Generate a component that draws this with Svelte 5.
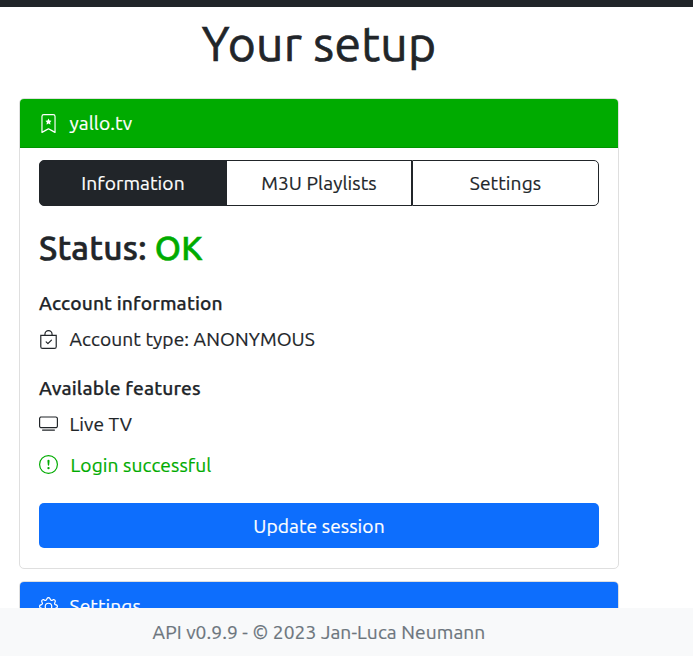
<script lang="ts">
  type Tab = { id: string; label: string };

  const tabs: Tab[] = [
    { id: "info", label: "Information" },
    { id: "playlists", label: "M3U Playlists" },
    { id: "settings", label: "Settings" },
  ];

  let active = $state("info");
</script>

<div class="page">
  <nav class="navbar"></nav>

  <main class="container">
    <h1>Your setup</h1>

    <section class="card provider">
      <div class="card-header success">
        <svg class="icon" viewBox="0 0 16 16" fill="currentColor">
          <path d="M7.84 4.1a.178.178 0 0 1 .32 0l.634 1.285a.178.178 0 0 0 .134.098l1.42.206c.145.021.204.2.098.303L9.42 6.993a.178.178 0 0 0-.051.158l.242 1.414a.178.178 0 0 1-.258.187l-1.27-.668a.178.178 0 0 0-.165 0l-1.27.668a.178.178 0 0 1-.257-.187l.242-1.414a.178.178 0 0 0-.05-.158l-1.03-1.001a.178.178 0 0 1 .098-.303l1.42-.206a.178.178 0 0 0 .134-.098L7.84 4.1z" />
          <path d="M2 2a2 2 0 0 1 2-2h8a2 2 0 0 1 2 2v13.500a.5.5 0 0 1-.777.416L8 13.101l-5.223 2.815A.5.5 0 0 1 2 15.500V2zm2-1a1 1 0 0 0-1 1v12.566l4.723-2.482a.5.5 0 0 1 .554 0L13 14.566V2a1 1 0 0 0-1-1H4z" />
        </svg>
        <span>yallo.tv</span>
      </div>

      <div class="card-body">
        <div class="btn-group">
          {#each tabs as tab (tab.id)}
            <button type="button" class:active={active === tab.id} onclick={() => (active = tab.id)}>
              {tab.label}
            </button>
          {/each}
        </div>

        <h2>Status: <span class="ok">OK</span></h2>

        <h3>Account information</h3>
        <p class="row">
          <svg class="icon" viewBox="0 0 16 16" fill="currentColor">
            <path fill-rule="evenodd" d="M10.854 8.146a.5.5 0 0 1 0 .708l-3 3a.5.5 0 0 1-.708 0l-1.500-1.500a.5.5 0 0 1 .708-.708L7.500 10.793l2.646-2.647a.5.5 0 0 1 .708 0z" />
            <path d="M8 1a2.500 2.500 0 0 1 2.500 2.500V4h-5v-.5A2.500 2.500 0 0 1 8 1zm3.500 3v-.5a3.500 3.500 0 1 0-7 0V4H1v10a2 2 0 0 0 2 2h10a2 2 0 0 0 2-2V4h-3.500zM2 5h12v9a1 1 0 0 1-1 1H3a1 1 0 0 1-1-1V5z" />
          </svg>
          <span>Account type: ANONYMOUS</span>
        </p>

        <h3 class="features">Available features</h3>
        <p class="row">
          <svg class="icon raised" viewBox="0 0 16 16" fill="currentColor">
            <path d="M2.500 13.500A.5.5 0 0 1 3 13h10a.5.5 0 0 1 0 1H3a.5.5 0 0 1-.5-.5zM13.991 3l.024.001a1.460 1.460 0 0 1 .538.143.757.757 0 0 1 .302.254c.067.1.145.277.145.602v5.991l-.001.024a1.464 1.464 0 0 1-.143.538.758.758 0 0 1-.254.302c-.1.067-.277.145-.602.145H2.009l-.024-.001a1.464 1.464 0 0 1-.538-.143.758.758 0 0 1-.302-.254C1.078 10.502 1 10.325 1 10V4.009l.001-.024a1.460 1.460 0 0 1 .143-.538.758.758 0 0 1 .254-.302C1.498 3.078 1.675 3 2 3h11.991zM14 2H2C0 2 0 4 0 4v6c0 2 2 2 2 2h12c2 0 2-2 2-2V4c0-2-2-2-2-2z" />
          </svg>
          <span>Live TV</span>
        </p>

        <p class="row login">
          <svg class="icon raised" viewBox="0 0 16 16" fill="currentColor">
            <path d="M8 15A7 7 0 1 1 8 1a7 7 0 0 1 0 14zm0 1A8 8 0 1 0 8 0a8 8 0 0 0 0 16z" />
            <path d="M7.002 11a1 1 0 1 1 2 0 1 1 0 0 1-2 0zM7.100 4.995a.905.905 0 1 1 1.800 0l-.35 3.507a.552.552 0 0 1-1.100 0L7.100 4.995z" />
          </svg>
          <span>Login successful</span>
        </p>

        <button type="button" class="update">Update session</button>
      </div>
    </section>

    <section class="card">
      <div class="card-header primary">
        <svg class="icon" viewBox="0 0 16 16" fill="currentColor">
          <path d="M8 4.754a3.246 3.246 0 1 0 0 6.492 3.246 3.246 0 0 0 0-6.492zM5.754 8a2.246 2.246 0 1 1 4.492 0 2.246 2.246 0 0 1-4.492 0z" />
          <path d="M9.796 1.343c-.527-1.790-3.065-1.790-3.592 0l-.094.319a.873.873 0 0 1-1.255.52l-.292-.16c-1.640-.892-3.433.902-2.540 2.541l.159.292a.873.873 0 0 1-.52 1.255l-.319.094c-1.790.527-1.790 3.065 0 3.592l.319.094a.873.873 0 0 1 .52 1.255l-.16.292c-.892 1.640.901 3.434 2.541 2.540l.292-.159a.873.873 0 0 1 1.255.52l.094.319c.527 1.790 3.065 1.790 3.592 0l.094-.319a.873.873 0 0 1 1.255-.52l.292.16c1.640.893 3.434-.902 2.540-2.541l-.159-.292a.873.873 0 0 1 .52-1.255l.319-.094c1.790-.527 1.790-3.065 0-3.592l-.319-.094a.873.873 0 0 1-.52-1.255l.16-.292c.893-1.640-.902-3.433-2.541-2.540l-.292.159a.873.873 0 0 1-1.255-.52l-.094-.319zm-2.633.283c.246-.835 1.428-.835 1.674 0l.094.319a1.873 1.873 0 0 0 2.693 1.115l.291-.16c.764-.415 1.600.42 1.184 1.185l-.159.292a1.873 1.873 0 0 0 1.116 2.692l.318.094c.835.246.835 1.428 0 1.674l-.319.094a1.873 1.873 0 0 0-1.115 2.693l.16.291c.415.764-.42 1.600-1.185 1.184l-.291-.159a1.873 1.873 0 0 0-2.693 1.116l-.094.318c-.246.835-1.428.835-1.674 0l-.094-.319a1.873 1.873 0 0 0-2.692-1.115l-.292.16c-.764.415-1.600-.42-1.184-1.185l.159-.291A1.873 1.873 0 0 0 1.945 8.930l-.319-.094c-.835-.246-.835-1.428 0-1.674l.319-.094A1.873 1.873 0 0 0 3.060 4.377l-.16-.292c-.415-.764.42-1.600 1.185-1.184l.292.159a1.873 1.873 0 0 0 2.692-1.115l.094-.319z" />
        </svg>
        <span>Settings</span>
      </div>
    </section>
  </main>

  <footer>
    <p>API v0.9.9 - © 2023 Jan-Luca Neumann</p>
  </footer>
</div>

<style>
  :global(body) {
    margin: 0;
    background: #fff;
  }

  .page {
    display: flex;
    flex-direction: column;
    height: 100vh;
    overflow: hidden;
    color: #212529;
    font-family: Ubuntu, "Noto Sans", sans-serif;
    font-size: 19.2px;
    line-height: 29px;
    letter-spacing: 0.08px;
    -webkit-text-stroke: 0.2px;
  }

  .navbar {
    flex: none;
    height: 7px;
    background: #212529;
  }

  .container {
    flex: 1;
    min-height: 0;
    box-sizing: border-box;
    width: 638px;
    padding: 7px 19px 0;
    overflow: hidden;
  }

  h1,
  h2,
  h3,
  p {
    margin: 0;
  }

  h1 {
    margin-bottom: 26px;
    font-size: 48px;
    font-weight: 400;
    line-height: 58px;
    text-align: center;
    letter-spacing: 0.25px;
    -webkit-text-stroke: 0.7px;
  }

  .card {
    box-sizing: border-box;
    margin-bottom: 12px;
    border: 1px solid #dfdfdf;
    border-radius: 5px;
    overflow: hidden;
  }

  .provider {
    height: 471px;
  }

  .card-header {
    display: flex;
    align-items: center;
    gap: 11.5px;
    box-sizing: border-box;
    height: 49px;
    padding: 0 19px;
    border-bottom: 1px solid rgba(0, 0, 0, 0.125);
    color: #fff;
  }

  .success {
    background: #00ab00;
  }

  .primary {
    background: #0d6efd;
  }

  .icon {
    flex: none;
    width: 19px;
    height: 19px;
  }

  .raised {
    margin-bottom: 2px;
  }

  .card-body {
    padding: 12px 19px;
  }

  .btn-group {
    display: grid;
    grid-template-columns: 187px 186px 187px;
    height: 46px;
  }

  .btn-group button {
    padding: 0;
    border: 1px solid #212529;
    color: #212529;
    background: #fff;
    font: inherit;
    letter-spacing: inherit;
    cursor: pointer;
  }

  .btn-group button:first-child {
    margin-right: -1px;
    border-radius: 5px 0 0 5px;
  }

  .btn-group button:last-child {
    border-radius: 0 5px 5px 0;
  }

  .btn-group button.active {
    z-index: 1;
    color: #fff;
    background: #212529;
  }

  h2 {
    margin-top: 23px;
    font-size: 33.6px;
    font-weight: 500;
    line-height: 38px;
    letter-spacing: 0.25px;
    -webkit-text-stroke: 0.6px;
  }

  .ok,
  .login {
    color: #00ab00;
  }

  h3 {
    margin-top: 22px;
    font-size: 19.2px;
    font-weight: 500;
    line-height: 29px;
    letter-spacing: 0.15px;
    -webkit-text-stroke: 0.25px;
  }

  .features {
    margin-top: 20px;
  }

  .row {
    display: flex;
    align-items: center;
    gap: 11.5px;
    margin-top: 7px;
  }

  .login {
    margin-top: 12px;
    gap: 12.5px;
  }

  .update {
    display: block;
    box-sizing: border-box;
    width: 100%;
    height: 45px;
    margin-top: 23px;
    padding: 2px 0 0;
    border: 0;
    border-radius: 5px;
    color: #fff;
    background: #0d6efd;
    font: inherit;
    letter-spacing: inherit;
    cursor: pointer;
  }

  footer {
    flex: none;
    height: 48px;
    background: #f8f9fa;
    color: #6c757d;
  }

  footer p {
    width: 638px;
    line-height: 48px;
    text-align: center;
  }
</style>
